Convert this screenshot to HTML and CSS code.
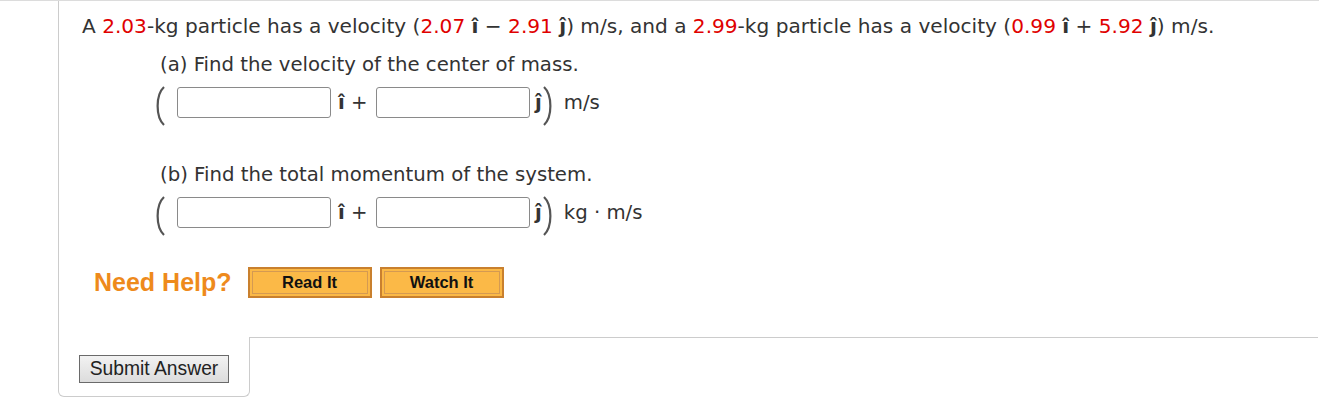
FILE: index.html
```html
<!DOCTYPE html>
<html>
<head>
<meta charset="utf-8">
<link rel="stylesheet" href="styles.css">
</head>
<body>
<div class="page">
  <div class="question">
    <p class="stem">A <span class="red">2.03</span>-kg particle has a velocity (<span class="red">2.07</span> <b>î</b> − <span class="red">2.91</span> <b>ĵ</b>) m/s, and a <span class="red">2.99</span>-kg particle has a velocity (<span class="red">0.99</span> <b>î</b> + <span class="red">5.92</span> <b>ĵ</b>) m/s.</p>
    <div class="part">
      <p class="label">(a) Find the velocity of the center of mass.</p>
      <div class="answer">
        <svg class="paren" width="14" height="40" viewBox="0 0 14 40"><path d="M11 1 C2.5 9 2.5 31 11 39" fill="none" stroke="#555" stroke-width="2.2"/></svg>
        <input class="box first" type="text">
        <span class="unitvec"><b>î</b> +</span>
        <input class="box" type="text">
        <span class="unitvec j"><b>ĵ</b></span>
        <svg class="paren" width="10" height="40" viewBox="0 0 10 40"><path d="M2 1 C10.5 9 10.5 31 2 39" fill="none" stroke="#555" stroke-width="2.2"/></svg>
        <span class="unit">m/s</span>
      </div>
    </div>
    <div class="part partb">
      <p class="label">(b) Find the total momentum of the system.</p>
      <div class="answer">
        <svg class="paren" width="14" height="40" viewBox="0 0 14 40"><path d="M11 1 C2.5 9 2.5 31 11 39" fill="none" stroke="#555" stroke-width="2.2"/></svg>
        <input class="box first" type="text">
        <span class="unitvec"><b>î</b> +</span>
        <input class="box" type="text">
        <span class="unitvec j"><b>ĵ</b></span>
        <svg class="paren" width="10" height="40" viewBox="0 0 10 40"><path d="M2 1 C10.5 9 10.5 31 2 39" fill="none" stroke="#555" stroke-width="2.2"/></svg>
        <span class="unit">kg · m/s</span>
      </div>
    </div>
    <div class="help">
      <span class="needhelp">Need Help?</span>
      <span class="helpbtn"><span class="helpinner">Read It</span></span>
      <span class="helpbtn"><span class="helpinner">Watch It</span></span>
    </div>
  </div>
  <div class="footer">
    <div class="tab"><button class="submit" type="button">Submit Answer</button></div>
    <div class="filler"></div>
  </div>
</div>
</body>
</html>
```

FILE: styles.css
```css
html, body {
  margin: 0;
  padding: 0;
  background: #fff;
}
.page {
  border-top: 1px solid #dcdcdc;
  height: 408px;
  box-sizing: border-box;
  font-family: "DejaVu Sans", Verdana, sans-serif;
  color: #333;
}
.question {
  margin-left: 58px;
  margin-right: 1px;
  border-left: 1px solid #ccc;
  height: 336px;
  box-sizing: border-box;
  padding: 13px 0 0 23px;
}
.stem {
  margin: 0;
  font-size: 20.1px;
  line-height: 24px;
  white-space: nowrap;
}
.red {
  color: #e00000;
}
.part {
  margin: 15px 0 0 78px;
}
.partb {
  margin-top: 37px;
}
.label {
  margin: 0;
  font-size: 19.7px;
  line-height: 24px;
}
.answer {
  display: flex;
  align-items: flex-start;
  height: 40px;
  margin-top: 9px;
  margin-left: -7px;
  font-size: 19.7px;
  line-height: 31px;
}
.paren {
  display: block;
}
.box {
  width: 154px;
  height: 31px;
  box-sizing: border-box;
  border: 1px solid #8a8a8a;
  border-radius: 3px;
  margin: 1px 0 0 0;
  padding: 0;
  background: #fff;
}
.box.first {
  margin-left: 10px;
}
.unitvec {
  margin: 1px 0 0 7px;
  width: 38px;
}
.unitvec.j {
  width: auto;
  margin-left: 5px;
}
.unit {
  margin: 1px 0 0 12px;
}
.help {
  display: flex;
  align-items: center;
  margin: 31px 0 0 12px;
}
.needhelp {
  font-family: "Liberation Sans", Arial, sans-serif;
  font-weight: bold;
  font-size: 25px;
  color: #ee8a1c;
  margin-right: 16px;
}
.helpbtn {
  display: inline-block;
  width: 124px;
  height: 31px;
  box-sizing: border-box;
  border: 2px solid #c9802e;
  background: #fbb947;
  padding: 2px;
  margin-right: 8px;
}
.helpinner {
  display: flex;
  align-items: center;
  justify-content: center;
  height: 100%;
  box-sizing: border-box;
  border: 1px solid #d49a52;
  font-family: "Liberation Sans", Arial, sans-serif;
  font-weight: bold;
  font-size: 16.5px;
  color: #111;
}
.footer {
  display: flex;
  margin-left: 58px;
  margin-right: 1px;
}
.tab {
  width: 192px;
  height: 60px;
  box-sizing: border-box;
  border: 1px solid #ccc;
  border-top: none;
  border-radius: 0 0 6px 6px;
  padding: 18px 0 0 20px;
}
.filler {
  flex: 1;
  border-top: 1px solid #ccc;
  height: 0;
}
.submit {
  display: block;
  width: 150px;
  height: 28px;
  box-sizing: border-box;
  border: 1px solid #6a6a6a;
  background: linear-gradient(#f2f2f2, #dcdcdc);
  font-family: "Liberation Sans", Arial, sans-serif;
  font-size: 19.3px;
  color: #222;
  padding: 0;
}
```
